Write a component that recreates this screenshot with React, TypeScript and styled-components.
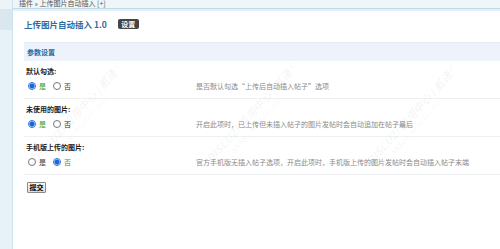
import React from "react"
import styled, { createGlobalStyle } from "styled-components"

const GlobalStyle = createGlobalStyle`
    html, body {
        margin: 0;
        padding: 0;
        background: #fff;
    }
    body {
        font-family: "Noto Sans CJK SC", "Liberation Sans", sans-serif;
        color: #222;
    }
`

const Page = styled.div`
    display: flex;
    min-height: 100vh;
    overflow: hidden;
`

const Sidebar = styled.div`
    width: 12px;
    flex-shrink: 0;
    display: flex;
    flex-direction: column;
    background: #e6f1f8;
    border-right: 1px solid #cde3ef;
`

const SideTop = styled.div`
    height: 9px;
    background: #edf4f8;
`

const SideItem = styled.div`
    height: 21px;
    background: #dbe7ef;
`

const Main = styled.div`
    position: relative;
    flex: 1;
    display: flex;
    flex-direction: column;
    overflow: hidden;
`

const TopBar = styled.div`
    height: 8px;
    overflow: hidden;
    background: #eef6f9;
    border-bottom: 1px solid #c4d9e5;
    box-shadow: 0 2px 0 #e1f0f7;
    padding-left: 6px;
    font-size: 7px;
    line-height: 7px;
    color: #555;
`

const Content = styled.div`
    display: flex;
    flex-direction: column;
    padding: 9px 0 0 11px;
`

const TitleRow = styled.div`
    display: flex;
    align-items: center;
    gap: 11px;
    height: 12px;
`

const Title = styled.h1`
    margin: 0;
    font-size: 8.5px;
    font-weight: bold;
    color: #2b6ca3;
`

const Badge = styled.span`
    display: inline-flex;
    align-items: center;
    justify-content: center;
    width: 21px;
    height: 10px;
    border-radius: 2px;
    background: #454545;
    color: #fff;
    font-size: 7px;
    font-weight: bold;
`

const SectionHead = styled.div`
    margin-top: 12px;
    height: 18px;
    display: flex;
    align-items: center;
    padding-left: 3px;
    background: #eef3fb;
    border-top: 1px solid #e3ebf5;
    font-size: 7px;
    font-weight: bold;
    color: #236aa0;
`

const Setting = styled.div`
    display: flex;
    flex-direction: column;
    border-bottom: 1px solid #eef0f2;
`

const Label = styled.div`
    padding: 5px 0 0 2px;
    line-height: 10px;
    font-size: 7px;
    font-weight: bold;
    color: #222;
`

const OptionRow = styled.div`
    display: grid;
    grid-template-columns: 172px 1fr;
    align-items: center;
    height: 12px;
    padding: 4px 0 6px;
`

const Choices = styled.div`
    display: flex;
    align-items: center;
    padding-left: 4px;
    gap: 4px;
`

const Choice = styled.label<{ $on: boolean }>`
    display: flex;
    align-items: center;
    gap: 3px;
    font-size: 7px;
    color: ${(p) => (p.$on ? "#1f9a1f" : "#333")};
    margin-right: 3px;
`

const Radio = styled.span<{ $on: boolean }>`
    width: 8px;
    height: 8px;
    box-sizing: border-box;
    border-radius: 50%;
    border: 1px solid ${(p) => (p.$on ? "#2f6fd4" : "#777")};
    background: ${(p) =>
        p.$on ? "radial-gradient(circle, #1766e0 0 2px, #8fb6ee 2.6px, #ffffff 3px)" : "#fff"};
`

const Desc = styled.div`
    font-size: 7px;
    color: #8a8a8a;
    white-space: nowrap;
`

const Submit = styled.button`
    align-self: flex-start;
    margin: 7px 0 0 3px;
    width: 19px;
    height: 11px;
    padding: 0;
    font-family: inherit;
    font-size: 7px;
    font-weight: bold;
    line-height: 9px;
    color: #000;
    background: linear-gradient(#f6f6f6, #dcdcdc);
    border: 1px solid #8a8a8a;
    border-radius: 1px;
`

const WatermarkLayer = styled.div`
    position: absolute;
    inset: 0;
    pointer-events: none;
`

const Mark = styled.div`
    position: absolute;
    transform-origin: left bottom;
    transform: rotate(-48deg);
    white-space: nowrap;
    color: rgba(0, 0, 0, 0.05);
    line-height: 1;
`

const MarkMain = styled.div`
    font-size: 11px;
    font-weight: bold;
    font-style: italic;
`

const MarkSub = styled.div`
    margin: 2px 0 0 22px;
    font-size: 8px;
`

type Opt = { label: string; value: boolean; desc: string }

const settings: Opt[] = [
    { label: "默认勾选:", value: true, desc: "是否默认勾选\u201c上传后自动插入帖子\u201d选项" },
    { label: "未使用的图片:", value: true, desc: "开启此项时，已上传但未插入帖子的图片发帖时会自动追加在帖子最后" },
    {
        label: "手机版上传的图片:",
        value: false,
        desc: "官方手机版无插入帖子选项，开启此项时，手机版上传的图片发帖时会自动插入帖子末端",
    },
]

// left edge of each watermark, measured on the page minus sidebar
const marks = [
    { left: 32, top: 150 },
    { left: 207, top: 150 },
    { left: 367, top: 152 },
]

export default function App() {
    return (
        <Page>
            <GlobalStyle />
            <Sidebar>
                <SideTop />
                <SideItem />
            </Sidebar>
            <Main>
                <TopBar>插件 » 上传图片自动插入 [+]</TopBar>
                <Content>
                    <TitleRow>
                        <Title>上传图片自动插入 1.0</Title>
                        <Badge>设置</Badge>
                    </TitleRow>
                    <SectionHead>参数设置</SectionHead>
                    {settings.map((s) => (
                        <Setting key={s.label}>
                            <Label>{s.label}</Label>
                            <OptionRow>
                                <Choices>
                                    <Choice $on={s.value}>
                                        <Radio $on={s.value} />是
                                    </Choice>
                                    <Choice $on={!s.value}>
                                        <Radio $on={!s.value} />否
                                    </Choice>
                                </Choices>
                                <Desc>{s.desc}</Desc>
                            </OptionRow>
                        </Setting>
                    ))}
                    <Submit>提交</Submit>
                </Content>
                <WatermarkLayer>
                    {marks.map((m, i) => (
                        <Mark key={i} style={{ left: m.left, top: m.top }}>
                            <MarkMain>DISCUZ! 应用中心 | 贰道®</MarkMain>
                            <MarkSub>addon.dismall.com</MarkSub>
                        </Mark>
                    ))}
                </WatermarkLayer>
            </Main>
        </Page>
    )
}
